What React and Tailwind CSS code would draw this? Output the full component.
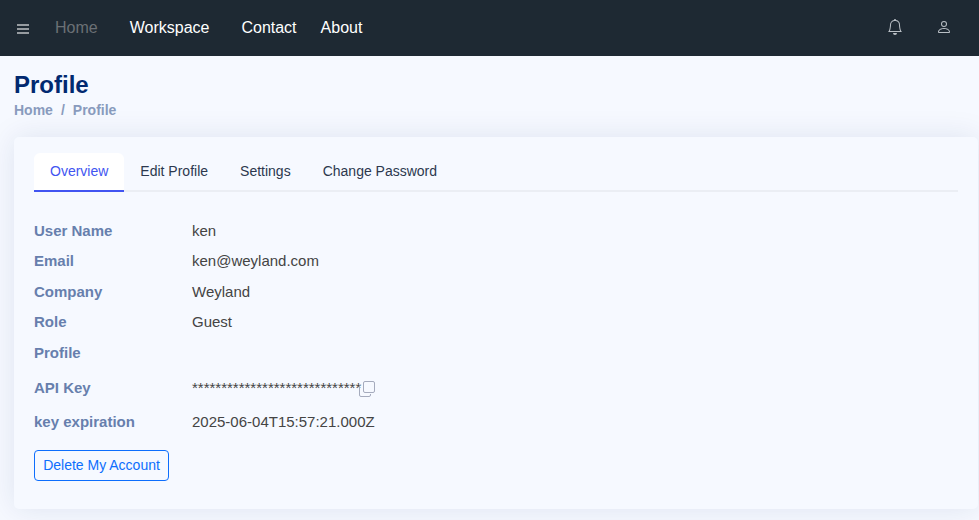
import { BsBell, BsPerson } from "react-icons/bs";

const tabs = ["Edit Profile", "Settings", "Change Password"];

function Row({ label, size, children }) {
  return (
    <div className={`flex items-start text-[15px] leading-[22px] ${size}`}>
      <div className="w-[158px] font-semibold text-[#677fad]">{label}</div>
      <div className="text-[#444444]">{children}</div>
    </div>
  );
}

function CopyIcon() {
  return (
    <svg width="17" height="17" viewBox="0 0 17 17" fill="none" stroke="#a5abbd" strokeWidth="1" className="mt-1 -ml-[2px]">
      <rect x="4.5" y="0.5" width="11" height="11" rx="1.5" />
      <path d="M0.5 4.5V14Q0.5 15.5 2 15.5H10Q11.5 15.5 11.5 14V13" />
    </svg>
  );
}

export default function App() {
  return (
    <div className="h-[520px] w-[979px] overflow-hidden bg-[#f6f9ff] font-['Liberation_Sans',Arial,sans-serif]">
      <header className="flex h-14 items-center bg-[#1e2933] pr-[27px] pl-[17px] text-base text-white">
        <div className="mt-[2px] flex w-3 flex-col gap-[2px]">
          <span className="h-[2px] bg-[#969ba0]" />
          <span className="h-[2px] bg-[#969ba0]" />
          <span className="h-[2px] bg-[#969ba0]" />
        </div>
        <nav className="ml-[26px] flex">
          <a className="mr-8 text-[#6b7075]">Home</a>
          <a className="mr-8">Workspace</a>
          <a className="mr-6">Contact</a>
          <a>About</a>
        </nav>
        <div className="mb-[2px] ml-auto flex items-center gap-[33px] text-[#b9bfc5]">
          <BsBell size={16} />
          <BsPerson size={16} />
        </div>
      </header>

      <main className="pt-[14px] pl-[14px]">
        <h1 className="text-2xl leading-[29px] font-semibold text-[#012970]">Profile</h1>
        <div className="mt-px flex gap-2 text-sm leading-[21px] font-semibold text-[#899bbd]">
          <span>Home</span>
          <span>/</span>
          <span>Profile</span>
        </div>

        <section className="mt-4 h-[372px] w-[964px] rounded-[5px] bg-[#f6f9ff] px-5 pt-4 shadow-[0_0_30px_rgba(1,41,112,0.1)]">
          <div className="flex h-[39px] w-[924px] border-b-2 border-[#ebeef4] text-sm text-[#2c384e]">
            <div className="h-[39px] rounded-t-[6px] border-b-2 border-[#4154f1] bg-white px-4 leading-[37px] text-[#4154f1]">
              Overview
            </div>
            {tabs.map((t) => (
              <div key={t} className="px-4 leading-[37px]">{t}</div>
            ))}
          </div>

          <div className="pt-6">
            <Row label="User Name" size="h-[30px] pt-1">ken</Row>
            <Row label="Email" size="h-[31px] pt-1">ken@weyland.com</Row>
            <Row label="Company" size="h-[30px] pt-1">Weyland</Row>
            <Row label="Role" size="h-[31px] pt-1">Guest</Row>
            <Row label="Profile" size="h-[30px] pt-1" />
            <Row label="API Key" size="h-[40px] pt-[9px]">
              <div className="flex items-start">
                *****************************
                <CopyIcon />
              </div>
            </Row>
            <Row label="key expiration" size="h-[28px] pt-[3px]">2025-06-04T15:57:21.000Z</Row>
          </div>

          <button className="mt-[14px] flex h-[31px] w-[135px] items-center justify-center rounded border border-[#0d6efd] pb-[2px] text-sm text-[#0d6efd]">
            Delete My Account
          </button>
        </section>
      </main>
    </div>
  );
}
